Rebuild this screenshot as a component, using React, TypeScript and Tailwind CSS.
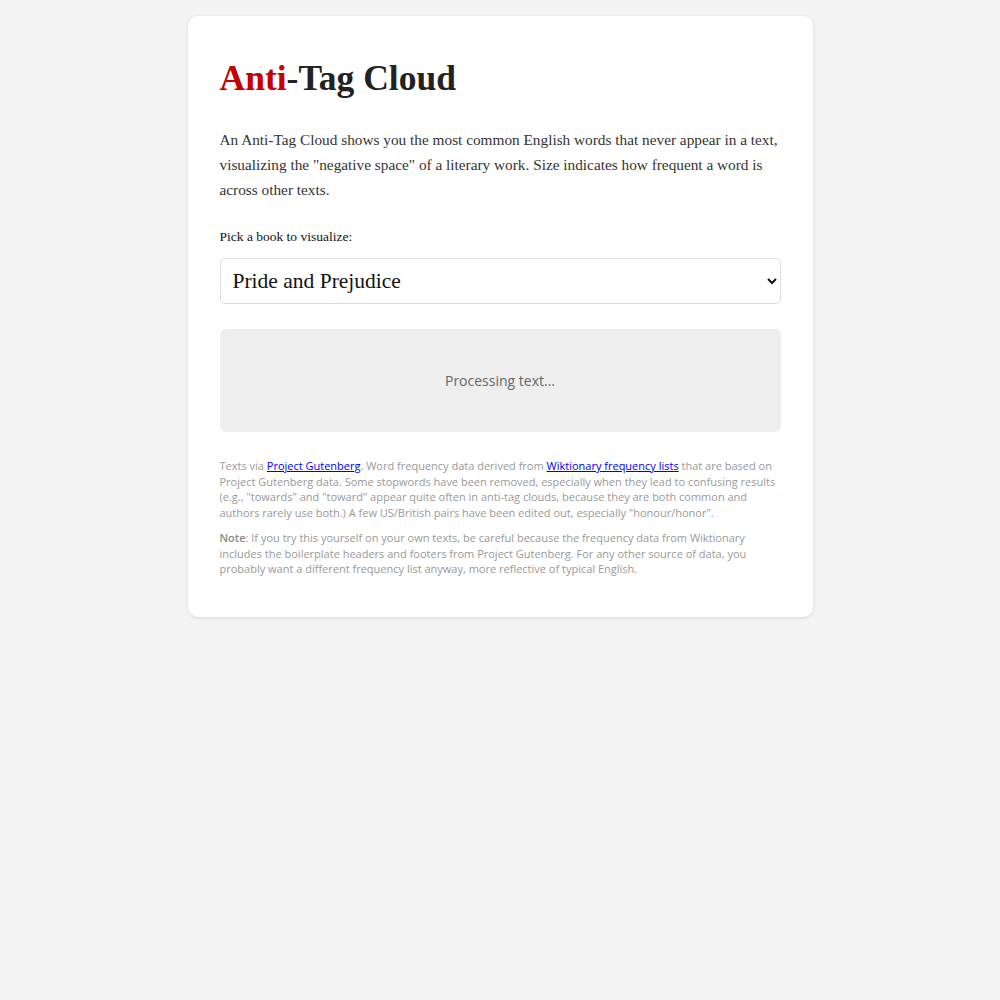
import React from "react";

export default function App() {
  return (
    <div className="min-h-[1000px] bg-[#f4f4f4] pt-4" style={{ fontFamily: '"Liberation Serif", serif' }}>
      <div className="mx-auto w-[625px] rounded-[10px] bg-white px-8 pt-[40px] pb-[40px] shadow-[0_1px_4px_rgba(0,0,0,0.12)]">
        <h1 className="text-[35.5px] font-bold leading-[44px] text-[#222]">
          <span className="text-[#c40000]">Anti</span>-Tag Cloud
        </h1>
        <p className="mt-[27px] text-[15.3px] leading-[25px] text-[#333]">
          An Anti-Tag Cloud shows you the most common English words that never appear in a text, visualizing the "negative space" of a literary work. Size indicates how frequent a word is across other texts.
        </p>
        <label className="mt-[24px] block text-[13.5px] leading-[22px] text-[#111]">Pick a book to visualize:</label>
        <select
          className="mt-[10px] block h-[46px] w-full rounded-[5px] border border-[#ddd] bg-white px-2 text-[21.5px] text-[#111]"
          defaultValue="pp"
        >
          <option value="pp">Pride and Prejudice</option>
        </select>
        <div
          className="mt-[25px] flex h-[103px] items-center justify-center rounded-[6px] bg-[#eeeeee] text-[14px] text-[#666]"
          style={{ fontFamily: '"Open Sans", sans-serif' }}
        >
          Processing text...
        </div>
        <div className="mt-[26px] text-[11px] leading-[15.5px] text-[#999]" style={{ fontFamily: '"Open Sans", sans-serif' }}>
          <p>
            Texts via <a href="#" className="text-[#0000ee] underline">Project Gutenberg</a>. Word frequency data derived from{" "}
            <a href="#" className="text-[#0000ee] underline">Wiktionary frequency lists</a> that are based on Project Gutenberg data. Some stopwords have been removed, especially when they lead to confusing results (e.g., "towards" and "toward" appear quite often in anti-tag clouds, because they are both common and authors rarely use both.) A few US/British pairs have been edited out, especially "honour/honor".
          </p>
          <p className="mt-[10px]">
            <span className="font-semibold text-[#888]">Note</span>: If you try this yourself on your own texts, be careful because the frequency data from Wiktionary includes the boilerplate headers and footers from Project Gutenberg. For any other source of data, you probably want a different frequency list anyway, more reflective of typical English.
          </p>
        </div>
      </div>
    </div>
  );
}
